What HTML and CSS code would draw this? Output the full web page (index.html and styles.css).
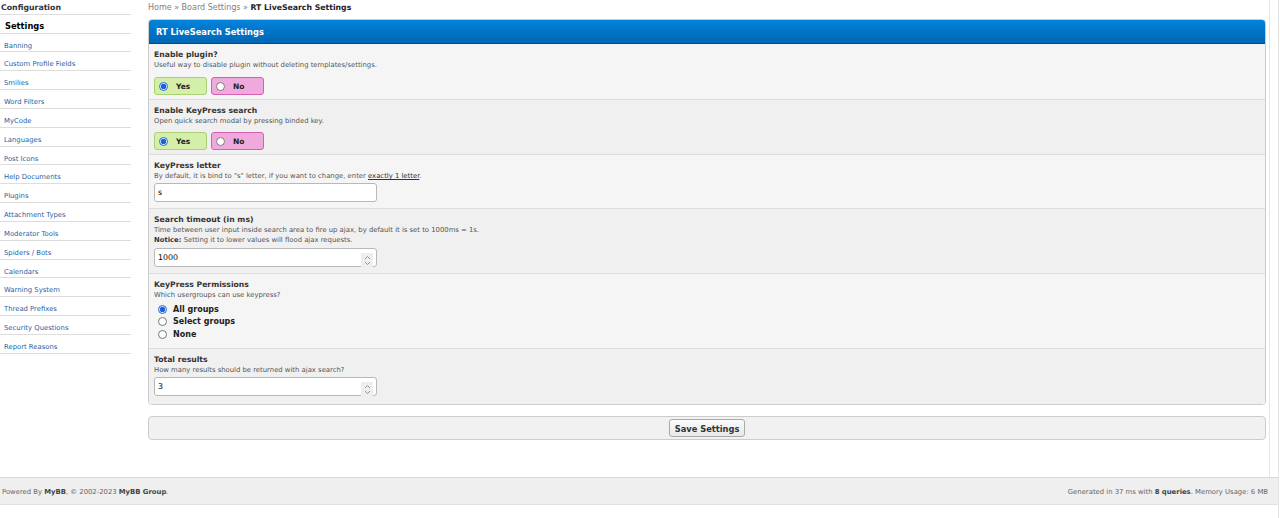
FILE: index.html
```html
<!DOCTYPE html>
<html lang="en">

<head>
    <meta charset="utf-8">
    <title>Board Settings - RT LiveSearch Settings</title>
    <link rel="stylesheet" href="styles.css">
</head>

<body>
    <div class="wrap">
        <div class="page">
            <div class="sidebar">
                <div class="menu-head">Configuration</div>
                <div class="menu-current">Settings</div>
                <ul class="menu">
                    <li><a href="#">Banning</a></li>
                    <li><a href="#">Custom Profile Fields</a></li>
                    <li><a href="#">Smilies</a></li>
                    <li><a href="#">Word Filters</a></li>
                    <li><a href="#">MyCode</a></li>
                    <li><a href="#">Languages</a></li>
                    <li><a href="#">Post Icons</a></li>
                    <li><a href="#">Help Documents</a></li>
                    <li><a href="#">Plugins</a></li>
                    <li><a href="#">Attachment Types</a></li>
                    <li><a href="#">Moderator Tools</a></li>
                    <li><a href="#">Spiders / Bots</a></li>
                    <li><a href="#">Calendars</a></li>
                    <li><a href="#">Warning System</a></li>
                    <li><a href="#">Thread Prefixes</a></li>
                    <li><a href="#">Security Questions</a></li>
                    <li><a href="#">Report Reasons</a></li>
                </ul>
            </div>

            <div class="content">
                <div class="breadcrumb">Home &raquo; Board Settings &raquo; <strong>RT LiveSearch Settings</strong></div>

                <form>
                    <div class="border-wrapper">
                        <div class="thead">RT LiveSearch Settings</div>

                        <div class="row first">
                            <div class="setting-title">Enable plugin?</div>
                            <div class="setting-desc">Useful way to disable plugin without deleting templates/settings.</div>
                            <div class="yesno">
                                <label class="yes"><input type="radio" name="enabled" checked>Yes</label>
                                <label class="no"><input type="radio" name="enabled">No</label>
                            </div>
                        </div>

                        <div class="row alt">
                            <div class="setting-title">Enable KeyPress search</div>
                            <div class="setting-desc">Open quick search modal by pressing binded key.</div>
                            <div class="yesno">
                                <label class="yes"><input type="radio" name="keypress" checked>Yes</label>
                                <label class="no"><input type="radio" name="keypress">No</label>
                            </div>
                        </div>

                        <div class="row">
                            <div class="setting-title">KeyPress letter</div>
                            <div class="setting-desc">By default, it is bind to "s" letter, if you want to change, enter <u>exactly 1 letter</u>.</div>
                            <input class="text-input" type="text" value="s">
                        </div>

                        <div class="row alt">
                            <div class="setting-title">Search timeout (in ms)</div>
                            <div class="setting-desc">Time between user input inside search area to fire up ajax, by default it is set to 1000ms = 1s.</div>
                            <div class="setting-desc notice"><b>Notice:</b> Setting it to lower values will flood ajax requests.</div>
                            <div class="number-field">
                                <input class="text-input" type="number" value="1000">
                                <span class="spin">
                                    <svg width="7" height="11" viewBox="0 0 7 11"><path d="M1 4 L3.5 1.5 L6 4 M1 7 L3.5 9.5 L6 7" fill="none" stroke="#8a8a8a" stroke-width="0.9"/></svg>
                                </span>
                            </div>
                        </div>

                        <div class="row">
                            <div class="setting-title">KeyPress Permissions</div>
                            <div class="setting-desc">Which usergroups can use keypress?</div>
                            <div class="radio-list">
                                <label><input type="radio" name="groups" checked>All groups</label>
                                <label><input type="radio" name="groups">Select groups</label>
                                <label><input type="radio" name="groups">None</label>
                            </div>
                        </div>

                        <div class="row alt last">
                            <div class="setting-title">Total results</div>
                            <div class="setting-desc">How many results should be returned with ajax search?</div>
                            <div class="number-field">
                                <input class="text-input" type="number" value="3">
                                <span class="spin">
                                    <svg width="7" height="11" viewBox="0 0 7 11"><path d="M1 4 L3.5 1.5 L6 4 M1 7 L3.5 9.5 L6 7" fill="none" stroke="#8a8a8a" stroke-width="0.9"/></svg>
                                </span>
                            </div>
                        </div>
                    </div>

                    <div class="form-buttons">
                        <button type="submit">Save Settings</button>
                    </div>
                </form>
            </div>
        </div>

        <div class="footer">
            <span>Powered By <b>MyBB</b>, &copy; 2002-2023 <b>MyBB Group</b>.</span>
            <span>Generated in 37&nbsp;ms with <b>8 queries</b>. Memory Usage: 6&nbsp;MB</span>
        </div>
    </div>
</body>

</html>
```

FILE: styles.css
```css
body {
    margin: 0;
    font-family: "DejaVu Sans", Verdana, sans-serif;
    font-size: 6.85px;
    color: #333;
    background: #fff;
}

a {
    color: #1f63a3;
    text-decoration: none;
}

.wrap {
    width: 1279px;
    min-height: 518px;
    box-sizing: border-box;
    border-right: 1px solid #e3e3e3;
}

.page {
    display: flex;
    width: 1270px;
    box-sizing: border-box;
    border-right: 1px solid #e6e6e6;
}

/* left menu */
.sidebar {
    width: 131px;
    flex-shrink: 0;
}

.menu-head {
    height: 15px;
    box-sizing: border-box;
    padding: 1px 0 0 1px;
    line-height: 14px;
    font-size: 7.8px;
    font-weight: bold;
    color: #333;
    border-bottom: 1px solid #ddd;
}

.menu-current {
    height: 18.5px;
    box-sizing: border-box;
    padding: 6px 0 0 5px;
    line-height: 10px;
    font-size: 8.3px;
    font-weight: bold;
    color: #000;
    border-bottom: 1px solid #ddd;
}

.menu {
    list-style: none;
    margin: 0;
    padding: 0;
}

.menu li a {
    display: block;
    height: 18.85px;
    box-sizing: border-box;
    padding: 8px 0 0 4px;
    line-height: 9px;
    border-bottom: 1px solid #ddd;
}

/* main column */
.content {
    flex: 1;
    margin: 0 3px 37px 17px;
}

.breadcrumb {
    height: 19px;
    line-height: 15px;
    font-size: 8px;
    color: #808080;
}

.breadcrumb strong {
    font-size: 7.75px;
    color: #222;
}

.border-wrapper {
    border: 1px solid #ccc;
    border-radius: 4px;
    overflow: hidden;
}

.thead {
    height: 24px;
    box-sizing: border-box;
    padding: 1px 0 0 7px;
    line-height: 22px;
    font-size: 8.3px;
    font-weight: bold;
    color: #fff;
    background: linear-gradient(#0283dc, #0066b4);
    border-bottom: 1px solid #0a4a7a;
}

.row {
    padding: 6px 5px 4px;
    background: #f5f5f5;
    border-bottom: 1px solid #ddd;
}

.row.alt {
    background: #f0f0f0;
}

.row.last {
    border-bottom: none;
    padding-bottom: 6px;
}

.setting-title {
    line-height: 10px;
    font-size: 7.7px;
    font-weight: bold;
    color: #333;
}

.setting-desc {
    line-height: 10px;
    color: #555;
}

.setting-desc u {
    color: #333;
}

.notice {
    line-height: 11px;
}

.notice b {
    color: #333;
}

.yesno {
    display: flex;
    gap: 4px;
    margin-top: 6px;
}

.row.first .yesno {
    margin-top: 7px;
}

.yesno label {
    display: flex;
    align-items: center;
    width: 53px;
    height: 18px;
    box-sizing: border-box;
    padding-left: 4px;
    font-size: 7.5px;
    font-weight: bold;
    color: #222;
    border: 1px solid;
    border-radius: 3px;
}

.yesno .yes {
    background: #d5eea9;
    border-color: #a9d274;
}

.yesno .no {
    background: #efa9dc;
    border-color: #d560b2;
}

input[type="radio"] {
    width: 9px;
    height: 9px;
    margin: 0 8px 0 0;
    accent-color: #1a62d6;
}

.text-input {
    display: block;
    width: 223px;
    height: 19px;
    box-sizing: border-box;
    margin: 2px 0;
    padding: 0 3px;
    font-family: "DejaVu Sans", Verdana, sans-serif;
    font-size: 7.9px;
    color: #000;
    background: #fff;
    border: 1px solid #b8b8b8;
    border-radius: 3px;
}

.text-input::-webkit-inner-spin-button,
.text-input::-webkit-outer-spin-button {
    -webkit-appearance: none;
    margin: 0;
}

.number-field {
    position: relative;
    width: 223px;
}

.spin {
    position: absolute;
    top: 5px;
    right: 4px;
    width: 12px;
    height: 15px;
    display: flex;
    align-items: center;
    justify-content: center;
    background: #eeeeee;
}

.radio-list {
    margin: 3px 0 3.5px;
}

.radio-list label {
    display: flex;
    align-items: center;
    height: 12.5px;
    padding-left: 4px;
    font-size: 8px;
    font-weight: bold;
    color: #222;
}

.radio-list input[type="radio"] {
    margin-right: 6px;
}

.form-buttons {
    margin-top: 11px;
    padding: 2px;
    text-align: center;
    background: #f1f1f1;
    border: 1px solid #ccc;
    border-radius: 4px;
}

.form-buttons button {
    display: block;
    margin: 0 auto;
    width: 76px;
    height: 18px;
    padding: 1px 0 0;
    font-family: "DejaVu Sans", Verdana, sans-serif;
    font-size: 8.3px;
    font-weight: bold;
    color: #333;
    background: linear-gradient(#fbfbfb, #e8e8e8);
    border: 1px solid #aaa;
    border-radius: 3px;
}

.footer {
    display: flex;
    justify-content: space-between;
    align-items: center;
    height: 28px;
    box-sizing: border-box;
    padding: 2px 10px 0 2px;
    color: #666;
    background: #efefef;
    border-top: 1px solid #d8d8d8;
    border-bottom: 1px solid #e2e2e2;
}

.footer b {
    color: #444;
}
```
